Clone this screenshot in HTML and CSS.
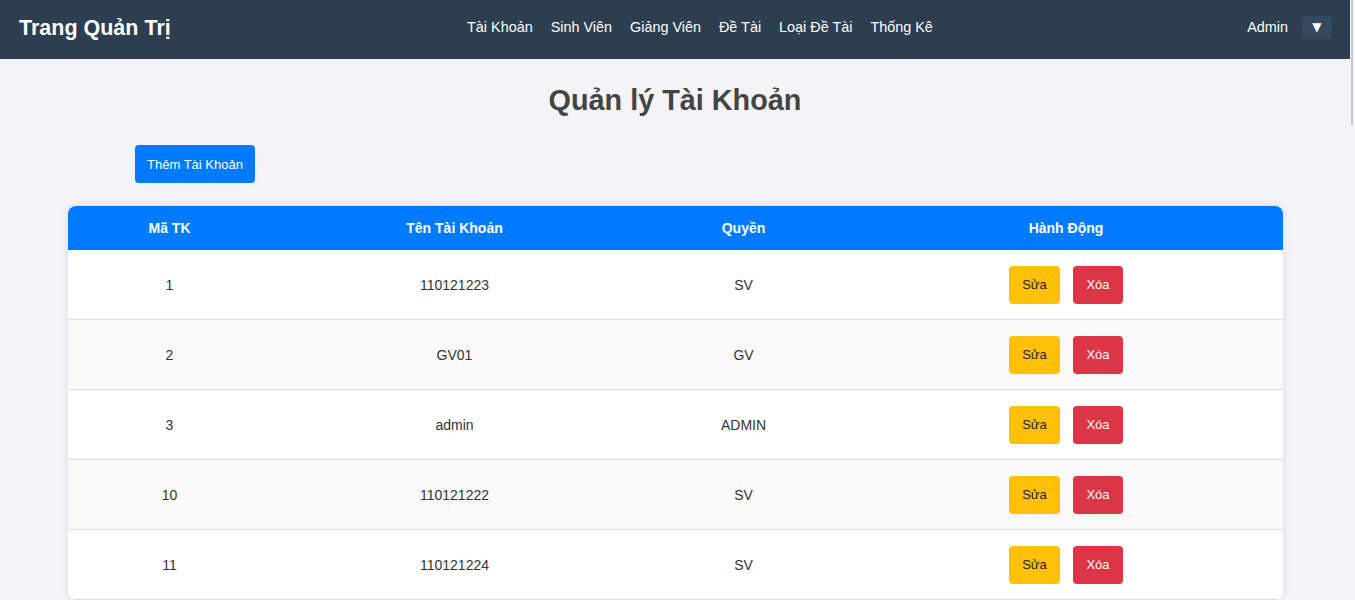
FILE: index.html
```html
<!DOCTYPE html>
<html lang="vi">
<head>
<meta charset="utf-8">
<title>Quản lý Tài Khoản</title>
<link rel="stylesheet" href="styles.css">
</head>
<body>
<div class="scroll-thumb"></div>
<header class="navbar">
  <div class="brand">Trang Quản Trị</div>
  <nav class="nav-links">
    <a href="#">Tài Khoản</a>
    <a href="#">Sinh Viên</a>
    <a href="#">Giảng Viên</a>
    <a href="#">Đề Tài</a>
    <a href="#">Loại Đề Tài</a>
    <a href="#">Thống Kê</a>
  </nav>
  <div class="user">
    <span class="user-name">Admin</span>
    <button class="dropdown-btn">▼</button>
  </div>
</header>

<main class="content">
  <h1 class="page-title">Quản lý Tài Khoản</h1>
  <div class="toolbar">
    <button class="btn btn-primary">Thêm Tài Khoản</button>
  </div>
  <table class="data-table">
    <thead>
      <tr>
        <th class="col-id">Mã TK</th>
        <th class="col-name">Tên Tài Khoản</th>
        <th class="col-role">Quyền</th>
        <th class="col-action">Hành Động</th>
      </tr>
    </thead>
    <tbody>
      <tr>
        <td>1</td><td>110121223</td><td>SV</td>
        <td><div class="actions"><button class="btn btn-warning">Sửa</button><button class="btn btn-danger">Xóa</button></div></td>
      </tr>
      <tr>
        <td>2</td><td>GV01</td><td>GV</td>
        <td><div class="actions"><button class="btn btn-warning">Sửa</button><button class="btn btn-danger">Xóa</button></div></td>
      </tr>
      <tr>
        <td>3</td><td>admin</td><td>ADMIN</td>
        <td><div class="actions"><button class="btn btn-warning">Sửa</button><button class="btn btn-danger">Xóa</button></div></td>
      </tr>
      <tr>
        <td>10</td><td>110121222</td><td>SV</td>
        <td><div class="actions"><button class="btn btn-warning">Sửa</button><button class="btn btn-danger">Xóa</button></div></td>
      </tr>
      <tr>
        <td>11</td><td>110121224</td><td>SV</td>
        <td><div class="actions"><button class="btn btn-warning">Sửa</button><button class="btn btn-danger">Xóa</button></div></td>
      </tr>
    </tbody>
  </table>
</main>
</body>
</html>
```

FILE: styles.css
```css
html {
  background: #f4f4f8;
}

body {
  margin: 0 5px 0 0;
  background: #f4f4f8;
  font-family: "Liberation Sans", Arial, sans-serif;
  color: #333;
}

.scroll-thumb {
  position: fixed;
  top: 0;
  right: 2px;
  width: 2px;
  height: 125px;
  background: #c9c9cd;
}

.navbar {
  display: flex;
  align-items: center;
  justify-content: space-between;
  height: 59px;
  padding: 0 18px 0 19px;
  background: #2c3e50;
  color: #fff;
}

.brand {
  font-size: 21.5px;
  font-weight: bold;
  margin-top: -3px;
}

.nav-links {
  display: flex;
}
.nav-links a {
  color: #fff;
  text-decoration: none;
  font-size: 14.4px;
  margin-right: 18px;
  margin-top: -5px;
}

.user {
  display: flex;
  align-items: center;
  gap: 14px;
  margin-top: -5px;
}
.user-name {
  font-size: 14.4px;
}
.dropdown-btn {
  width: 30px;
  height: 23px;
  padding: 0;
  border: none;
  border-radius: 4px;
  background: #34495e;
  color: #fff;
  font-family: "DejaVu Sans", sans-serif;
  font-size: 12px;
  line-height: 23px;
}

.content {
  padding-top: 1px;
}

.page-title {
  margin: 22px 0 0;
  text-align: center;
  font-size: 28.8px;
  color: #444;
  line-height: 36px;
}

.toolbar {
  margin: 27px 0 0 10%;
}

.btn {
  border: none;
  border-radius: 4px;
  font-family: "Liberation Sans", Arial, sans-serif;
  font-size: 13px;
  height: 38px;
  padding: 0;
  white-space: nowrap;
  cursor: pointer;
}
.btn-primary {
  background: #007bff;
  color: #fff;
  width: 120px;
}
.btn-warning {
  background: #ffc107;
  color: #212529;
  width: 51px;
}
.btn-danger {
  background: #dc3545;
  color: #fff;
  width: 50px;
}

.data-table {
  width: 90%;
  margin: 23px auto 0;
  border-collapse: separate;
  border-spacing: 0;
  background: #fff;
  border-radius: 8px;
  overflow: hidden;
  box-shadow: 0 0 8px rgba(0, 0, 0, 0.1);
  font-size: 14px;
}

.data-table th {
  background: #007bff;
  color: #fff;
  font-weight: bold;
  height: 44px;
  padding: 0 12px;
  text-align: center;
}
.col-id { width: 180px; }
.col-name { width: 342px; }
.col-role { width: 188px; }

.data-table td {
  height: 69px;
  padding: 0 12px;
  text-align: center;
  border-bottom: 1px solid #ddd;
}
.data-table tbody tr:nth-child(even) td {
  background: #f9f9f9;
}

.actions {
  display: flex;
  justify-content: center;
  gap: 13px;
}
```
